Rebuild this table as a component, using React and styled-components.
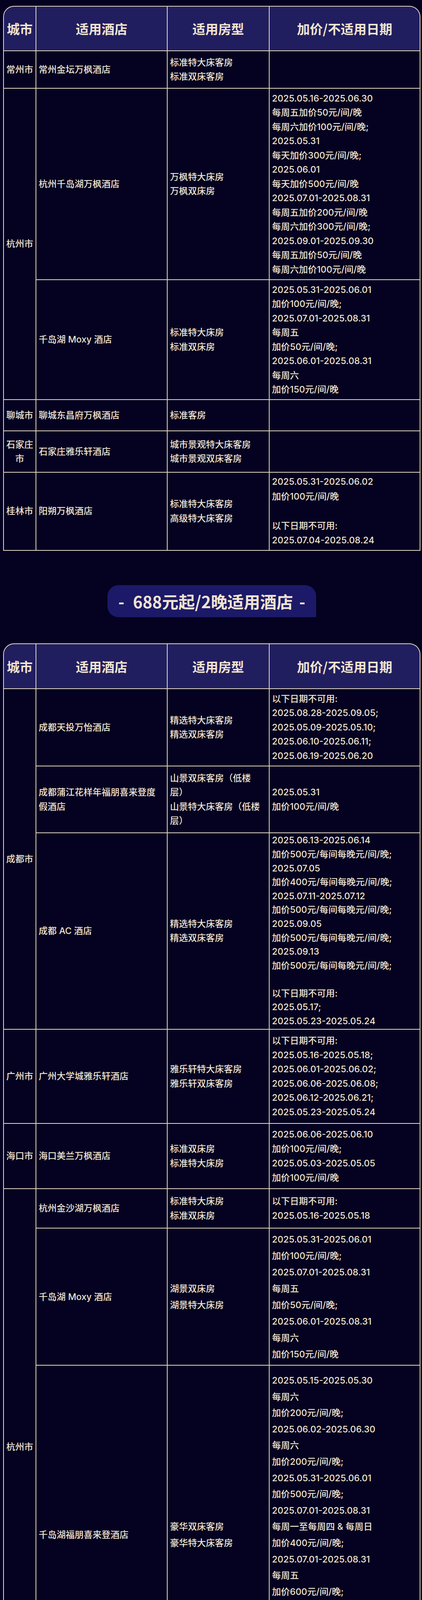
import React from 'react';
import styled, { createGlobalStyle } from 'styled-components';

const C = {
  page: '#040220',
  head: '#211e5f',
  banner: '#1c1968',
  line: '#e3d5c2',
  text: '#f1e4d1',
};

const GlobalStyle = createGlobalStyle`
  html, body {
    margin: 0;
    padding: 0;
    background: ${C.page};
  }
  body {
    font-family: Inter, "Noto Sans CJK SC", sans-serif;
    color: ${C.text};
  }
`;

const columns = [85, 336, 261, 386];
const headers = ['城市', '适用酒店', '适用房型', '加价/不适用日期'];

const firstTable = [
  {
    city: ['常州市'],
    rows: [{ h: 96, name: ['常州金坛万枫酒店'], rooms: ['标准特大床客房', '标准双床客房'], dates: [] }],
  },
  {
    city: ['杭州市'],
    rows: [
      {
        h: 490,
        name: ['杭州千岛湖万枫酒店'],
        rooms: ['万枫特大床房', '万枫双床房'],
        dates: [
          '2025.05.16-2025.06.30',
          '每周五加价50元/间/晚',
          '每周六加价100元/间/晚;',
          '2025.05.31',
          '每天加价300元/间/晚;',
          '2025.06.01',
          '每天加价500元/间/晚',
          '2025.07.01-2025.08.31',
          '每周五加价200元/间/晚',
          '每周六加价300元/间/晚;',
          '2025.09.01-2025.09.30',
          '每周五加价50元/间/晚',
          '每周六加价100元/间/晚',
        ],
      },
      {
        h: 307,
        name: ['千岛湖 Moxy 酒店'],
        rooms: ['标准特大床房', '标准双床房'],
        dates: [
          '2025.05.31-2025.06.01',
          '加价100元/间/晚;',
          '2025.07.01-2025.08.31',
          '每周五',
          '加价50元/间/晚;',
          '2025.06.01-2025.08.31',
          '每周六',
          '加价150元/间/晚',
        ],
      },
    ],
  },
  {
    city: ['聊城市'],
    rows: [{ h: 80, name: ['聊城东昌府万枫酒店'], rooms: ['标准客房'], dates: [] }],
  },
  {
    city: ['石家庄', '市'],
    rows: [{ h: 106, name: ['石家庄雅乐轩酒店'], rooms: ['城市景观特大床客房', '城市景观双床客房'], dates: [] }],
  },
  {
    city: ['桂林市'],
    rows: [
      {
        h: 200,
        lh: 37.5,
        name: ['阳朔万枫酒店'],
        rooms: ['标准特大床客房', '高级特大床客房'],
        dates: ['2025.05.31-2025.06.02', '加价100元/间/晚', '', '以下日期不可用:', '2025.07.04-2025.08.24'],
      },
    ],
  },
];

const secondTable = [
  {
    city: ['成都市'],
    rows: [
      {
        h: 198,
        name: ['成都天投万怡酒店'],
        rooms: ['精选特大床客房', '精选双床客房'],
        dates: [
          '以下日期不可用:',
          '2025.08.28-2025.09.05;',
          '2025.05.09-2025.05.10;',
          '2025.06.10-2025.06.11;',
          '2025.06.19-2025.06.20',
        ],
      },
      {
        h: 171,
        name: ['成都蒲江花样年福朋喜来登度', '假酒店'],
        rooms: ['山景双床客房（低楼', '层）', '山景特大床客房（低楼', '层）'],
        dates: ['2025.05.31', '加价100元/间/晚'],
      },
      {
        h: 503,
        lh: 35.6,
        name: ['成都 AC 酒店'],
        rooms: ['精选特大床客房', '精选双床客房'],
        dates: [
          '2025.06.13-2025.06.14',
          '加价500元/每间每晚元/间/晚;',
          '2025.07.05',
          '加价400元/每间每晚元/间/晚;',
          '2025.07.11-2025.07.12',
          '加价500元/每间每晚元/间/晚;',
          '2025.09.05',
          '加价500元/每间每晚元/间/晚;',
          '2025.09.13',
          '加价500元/每间每晚元/间/晚;',
          '',
          '以下日期不可用:',
          '2025.05.17;',
          '2025.05.23-2025.05.24',
        ],
      },
    ],
  },
  {
    city: ['广州市'],
    rows: [
      {
        h: 241,
        name: ['广州大学城雅乐轩酒店'],
        rooms: ['雅乐轩特大床客房', '雅乐轩双床客房'],
        dates: [
          '以下日期不可用:',
          '2025.05.16-2025.05.18;',
          '2025.06.01-2025.06.02;',
          '2025.06.06-2025.06.08;',
          '2025.06.12-2025.06.21;',
          '2025.05.23-2025.05.24',
        ],
      },
    ],
  },
  {
    city: ['海口市'],
    rows: [
      {
        h: 167,
        lh: 37,
        name: ['海口美兰万枫酒店'],
        rooms: ['标准双床房', '标准特大床房'],
        dates: ['2025.06.06-2025.06.10', '加价100元/间/晚;', '2025.05.03-2025.05.05', '加价100元/间/晚'],
      },
    ],
  },
  {
    city: ['杭州市'],
    rows: [
      {
        h: 101,
        name: ['杭州金沙湖万枫酒店'],
        rooms: ['标准特大床房', '标准双床房'],
        dates: ['以下日期不可用:', '2025.05.16-2025.05.18'],
      },
      {
        h: 351,
        lh: 42,
        name: ['千岛湖 Moxy 酒店'],
        rooms: ['湖景双床房', '湖景特大床房'],
        dates: [
          '2025.05.31-2025.06.01',
          '加价100元/间/晚;',
          '2025.07.01-2025.08.31',
          '每周五',
          '加价50元/间/晚;',
          '2025.06.01-2025.08.31',
          '每周六',
          '加价150元/间/晚',
        ],
      },
      {
        h: 870,
        lh: 41.6,
        name: ['千岛湖福朋喜来登酒店'],
        rooms: ['豪华双床客房', '豪华特大床客房'],
        dates: [
          '2025.05.15-2025.05.30',
          '每周六',
          '加价200元/间/晚;',
          '2025.06.02-2025.06.30',
          '每周六',
          '加价200元/间/晚;',
          '2025.05.31-2025.06.01',
          '加价500元/间/晚;',
          '2025.07.01-2025.08.31',
          '每周一至每周四 & 每周日',
          '加价400元/间/晚;',
          '2025.07.01-2025.08.31',
          '每周五',
          '加价600元/间/晚;',
          '2025.07.01-2025.08.31',
          '每周六',
          '加价900元/间/晚;',
          '2025.09.01-2025.09.30',
          '每周六',
          '加价200元/间/晚',
        ],
      },
    ],
  },
  {
    city: ['金华市'],
    rows: [{ h: 144, lh: 42, name: ['浦江鑫广万豪万枫酒店'], rooms: ['尊贵特大床客房', '尊贵双床客房'], dates: [] }],
  },
  {
    city: ['丽水市'],
    rows: [
      {
        h: 347,
        lh: 41.6,
        name: ['丽水银泰源宿酒店'],
        rooms: ['高级特大床客房', '高级双床客房'],
        dates: [
          '2025.06.01',
          '加价100元/间/晚;',
          '2025.07.15-2025.08.25',
          '加价100元/间/晚',
          '',
          '以下日期不可用:',
          '2025.05.30-2025.05.31',
        ],
      },
    ],
  },
  {
    city: ['南京市'],
    rows: [
      {
        h: 175,
        lh: 38,
        name: ['南京江宁 Moxy 酒店'],
        rooms: ['标准大床房', '标准双床房'],
        dates: ['2025.05.01-2025.05.03', '加价350元/间/晚;', '2025.05.31-2025.06.01', '加价100元/间/晚'],
      },
    ],
  },
  {
    city: ['南宁市'],
    rows: [
      {
        h: 115,
        lh: 38,
        name: ['南宁五象万怡酒店'],
        rooms: ['万怡特大床客房', '万怡双床客房'],
        dates: ['2025.09.17-2025.09.21', '加价200元/间/晚'],
      },
    ],
  },
  {
    city: ['汕尾市'],
    rows: [{ h: 103, lh: 38, name: ['深圳深汕特别合作区万枫酒店'], rooms: ['标准特大床客房', '标准双床客房'], dates: [] }],
  },
  {
    city: ['上海市'],
    rows: [
      {
        h: 125,
        lh: 38,
        name: ['上海圣淘沙万怡酒店'],
        rooms: ['商务特大床客房', '商务双床客房'],
        dates: ['以下日期不可用:', '2025.05.16'],
      },
      {
        h: 400,
        lh: 38,
        name: ['上海虹桥国家会展中心 Moxy', '酒店'],
        rooms: ['标准特大床客房', '标准双床客房'],
        dates: [
          '以下日期不可用:',
          '2025.05.18-2025.05.21;',
          '2025.05.25-2025.05.27;',
          '2025.06.10-2025.06.12;',
          '2025.06.23-2025.06.25;',
          '2025.07.10-2025.07.12;',
          '2025.07.15-2025.07.17;',
          '2025.09.01-2025.09.03;',
          '2025.09.08-2025.09.10;',
          '2025.09.22-2025.09.25',
        ],
      },
    ],
  },
  {
    city: ['绍兴市'],
    rows: [{ h: 113, lh: 38, name: ['诸暨万枫酒店'], rooms: ['高级特大床客房', '高级双床客房'], dates: [] }],
  },
  {
    city: ['台山市'],
    rows: [
      {
        h: 250,
        lh: 38,
        name: ['台山昌大昌万枫酒店'],
        rooms: ['高级特大床房', '高级景观特大床房'],
        dates: [
          '2025.05.16-2025.09.30',
          '每周五至每周六',
          '加价200元/间/晚',
          '',
          '以下日期不可用:',
          '2025.05.31-2025.06.01',
        ],
      },
    ],
  },
  {
    city: ['无锡市', '江阴市'],
    rows: [{ h: 103, lh: 38, name: ['江阴万怡酒店'], rooms: ['标准特大床客房', '标准双床客房'], dates: [] }],
  },
  {
    city: ['武汉市'],
    rows: [
      { h: 109, lh: 38, name: ['武汉江夏联投福朋喜来登酒店'], rooms: ['豪华城景特大床客房', '豪华城景双床客房'], dates: [] },
    ],
  },
  {
    city: ['西安市'],
    rows: [
      {
        h: 166,
        lh: 38,
        name: ['西安浐灞万枫酒店'],
        rooms: ['万枫大床房'],
        dates: ['2025.07.10-2025.08.22', '每周五至每周六', '加价50元/间/晚'],
      },
      {
        h: 352,
        lh: 40.8,
        name: ['西安 Moxy 酒店'],
        rooms: ['特大床客房', '双床客房'],
        dates: [
          '2025.05.31-2025.06.02',
          '加价50元/间/晚;',
          '2025.06.06-2025.06.08',
          '加价300元/间/晚;',
          '2025.06.20-2025.06.22',
          '加价200元/间/晚;',
          '2025.07.01-2025.08.31',
          '加价50元/间/晚',
        ],
      },
    ],
  },
  {
    city: ['烟台市'],
    rows: [
      {
        h: 316,
        lh: 40,
        name: ['烟台雅乐轩酒店'],
        rooms: ['快活乐窝特大床客房', '快活乐窝双床客房'],
        dates: [
          '2025.07.01-2025.07.13',
          '加价100元/间/晚;',
          '2025.08.25-2025.08.31',
          '加价100元/间/晚;',
          '',
          '以下日期不可用:',
          '2025.07.14-2025.08.24',
        ],
      },
    ],
  },
  {
    city: ['益阳市'],
    rows: [
      {
        h: 252,
        lh: 40,
        name: ['益阳宝基福朋喜来登酒店'],
        rooms: ['传统特大床客房', '传统双床客房'],
        dates: [
          '2025.05.16-2025.09.30',
          '每周二至每周四',
          '加价50元/间/晚;',
          '',
          '以下日期不可用:',
          '2025.05.31-2025.06.02',
        ],
      },
    ],
  },
  {
    city: ['余姚'],
    rows: [{ h: 118, lh: 38, name: ['余姚万枫酒店'], rooms: ['标准特大床客房', '标准双床客房'], dates: [] }],
  },
  {
    city: ['郑州市'],
    rows: [{ h: 131, lh: 40, name: ['郑州航空港万怡酒店'], rooms: ['特大床客房', '双床客房'], dates: [] }],
  },
  {
    city: ['重庆市'],
    rows: [
      {
        h: 116,
        lh: 38,
        name: ['重庆 Moxy 酒店'],
        rooms: ['标准特大床客房', '标准双床客房'],
        dates: ['2025.05.31-2025.06.01', '加价100元/间/晚'],
      },
    ],
  },
];

function Lines({ items }) {
  return items.map((t, i) => <Line key={i}>{t || '\u00a0'}</Line>);
}

function HotelTable({ groups, headH }) {
  return (
    <Table>
      <colgroup>
        {columns.map((w) => (
          <Col key={w} $w={w} />
        ))}
      </colgroup>
      <thead>
        <HeadRow $h={headH}>
          {headers.map((h) => (
            <Th key={h}>{h}</Th>
          ))}
        </HeadRow>
      </thead>
      <tbody>
        {groups.map((g) =>
          g.rows.map((r, i) => (
            <Row key={g.city.join('') + r.name.join('')} $h={r.h} $lh={r.lh || 36.5}>
              {i === 0 && (
                <CityCell rowSpan={g.rows.length}>
                  <Lines items={g.city} />
                </CityCell>
              )}
              <Cell>
                <Lines items={r.name} />
              </Cell>
              <Cell>
                <Lines items={r.rooms} />
              </Cell>
              <Cell>
                <Lines items={r.dates} />
              </Cell>
            </Row>
          ))
        )}
      </tbody>
    </Table>
  );
}

export default function App() {
  return (
    <>
      <GlobalStyle />
      <Page>
        <HotelTable groups={firstTable} headH={116} />
        <Banner>
          <Dash>-</Dash>
          688元起/2晚适用酒店
          <Dash $right>-</Dash>
        </Banner>
        <HotelTable groups={secondTable} headH={117} />
      </Page>
    </>
  );
}

const Page = styled.div`
  min-height: 7942px;
  box-sizing: border-box;
  padding: 15px 4px 0 8px;
  background: ${C.page};
`;

const Table = styled.table`
  width: 1068px;
  table-layout: fixed;
  border-collapse: separate;
  border-spacing: 0;
  font-size: 23px;
  font-weight: 500;
  color: ${C.text};
`;

const Col = styled.col`
  width: ${(p) => p.$w}px;
`;

const HeadRow = styled.tr`
  height: ${(p) => p.$h}px;
`;

const Th = styled.th`
  padding: 0;
  background: ${C.head};
  border-top: 2px solid ${C.line};
  border-right: 2px solid ${C.line};
  border-bottom: 2px solid ${C.line};
  font-family: "Noto Sans CJK SC", sans-serif;
  font-size: 33px;
  font-weight: 700;
  line-height: 40px;
  text-align: center;
  vertical-align: middle;
  white-space: nowrap;

  &:first-child {
    border-left: 2px solid ${C.line};
    border-top-left-radius: 28px;
  }
  &:last-child {
    border-top-right-radius: 28px;
  }
`;

const Row = styled.tr`
  height: ${(p) => p.$h}px;
  line-height: ${(p) => p.$lh}px;
`;

const Cell = styled.td`
  padding: 0 4px 0 6px;
  border-right: 2px solid ${C.line};
  border-bottom: 2px solid ${C.line};
  text-align: left;
  vertical-align: middle;
  white-space: nowrap;
  overflow: hidden;
`;

const CityCell = styled(Cell)`
  padding: 0;
  border-left: 2px solid ${C.line};
  text-align: center;
`;

const Line = styled.div``;

const Banner = styled.div`
  width: 534px;
  height: 82px;
  margin: 88px auto 67px;
  display: flex;
  align-items: center;
  justify-content: center;
  background: ${C.banner};
  border-radius: 28px 28px 0 28px;
  font-family: "Noto Sans CJK SC", sans-serif;
  font-size: 42px;
  font-weight: 700;
  line-height: 50px;
  color: ${C.text};
  white-space: nowrap;
`;

const Dash = styled.span`
  margin: ${(p) => (p.$right ? '0 0 0 16px' : '0 22px 0 0')};
`;
